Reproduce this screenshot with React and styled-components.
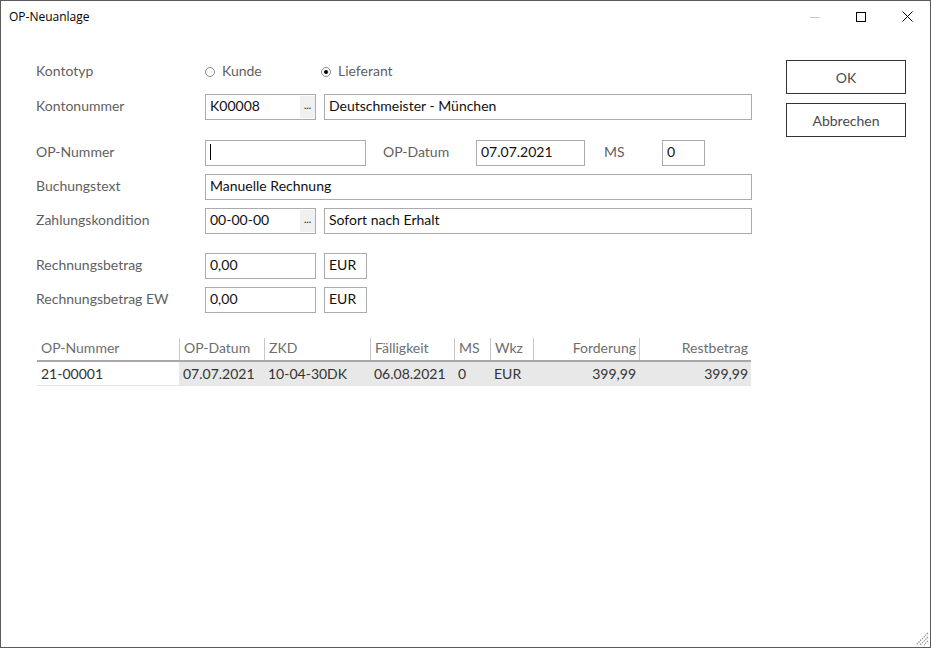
import React from "react";
import styled, { createGlobalStyle } from "styled-components";

const Global = createGlobalStyle`
  html, body { margin: 0; padding: 0; background: #fff; }
  body { font-family: "Source Sans Pro", Lato, "Noto Sans", sans-serif; }
  * { box-sizing: border-box; }
`;

const Window = styled.div`
  width: 931px;
  height: 648px;
  border: 1px solid #5b5b5b;
  background: #fff;
  position: relative;
  display: flex;
  flex-direction: column;
  overflow: hidden;
`;

const TitleBar = styled.div`
  height: 31px;
  display: flex;
  align-items: center;
  padding-left: 8px;
  font-family: "Segoe UI", "Open Sans", "Liberation Sans", sans-serif;
  font-size: 12px;
  color: #000;
`;

const Title = styled.div`
  flex: 1;
`;

const WinButton = styled.div`
  width: 46px;
  height: 31px;
  display: flex;
  align-items: center;
  justify-content: center;
`;

const Body = styled.div`
  flex: 1;
  display: flex;
  padding: 29px 0 0 35px;
`;

const FormCol = styled.div`
  width: 716px;
  display: flex;
  flex-direction: column;
`;

const Row = styled.div`
  display: flex;
  align-items: center;
  height: ${(p) => p.$h || 26}px;
  margin-top: ${(p) => p.$mt || 0}px;
`;

const Label = styled.div`
  width: ${(p) => p.$w || 169}px;
  padding-left: ${(p) => p.$pl || 0}px;
  flex-shrink: 0;
  font-size: 14px;
  color: #5f5f5f;
  margin-top: -3px;
`;

const Input = styled.div`
  position: relative;
  width: ${(p) => (p.$w ? p.$w + "px" : "auto")};
  flex: ${(p) => (p.$w ? "none" : 1)};
  height: 26px;
  border: 1px solid #ababab;
  background: #fff;
  font-size: 14px;
  color: #111;
  padding: 0 4px;
  line-height: 22px;
  margin-right: ${(p) => p.$mr || 0}px;
  white-space: nowrap;
`;

const Dots = styled.div`
  position: absolute;
  right: 0;
  top: 1px;
  width: 15px;
  height: 22px;
  background: #f0f0f0;
  font-size: 10px;
  line-height: 18px;
  text-align: center;
  color: #333;
  font-weight: bold;
`;

const Caret = styled.span`
  display: inline-block;
  width: 1px;
  height: 16px;
  background: #000;
  vertical-align: middle;
  margin-top: -3px;
`;

const RadioItem = styled.div`
  display: flex;
  align-items: center;
  font-size: 14px;
  color: #5f5f5f;
  width: ${(p) => p.$w}px;
  margin-top: -3px;
`;

const RadioDot = styled.span`
  width: 10px;
  height: 10px;
  border-radius: 50%;
  border: 1px solid #8a8a8a;
  margin-right: 7px;
  margin-top: 2px;
  display: flex;
  align-items: center;
  justify-content: center;
  &::after {
    content: "";
    width: 4px;
    height: 4px;
    border-radius: 50%;
    background: ${(p) => (p.$on ? "#000" : "transparent")};
  }
`;

const Table = styled.div`
  margin-top: 23px;
  width: 714px;
  margin-left: 1px;
`;

const TRow = styled.div`
  display: grid;
  grid-template-columns: 142px 85px 106px 84px 36px 43px 106px 112px;
  height: ${(p) => p.$h}px;
  border-bottom: ${(p) => (p.$header ? "2px solid #a8a8a8" : "1px solid #e6e6e6")};
`;

const Cell = styled.div`
  font-size: 14px;
  color: ${(p) => (p.$header ? "#6e6e6e" : "#333")};
  background: ${(p) => (p.$shade ? "#e8e8e8" : "transparent")};
  border-left: ${(p) => (p.$sep ? "1px solid #c8c8c8" : "none")};
  padding: ${(p) => (p.$right ? "0 3px 0 0" : "0 0 0 4px")};
  text-align: ${(p) => (p.$right ? "right" : "left")};
  display: flex;
  align-items: ${(p) => (p.$header ? "flex-start" : "center")};
  justify-content: ${(p) => (p.$right ? "flex-end" : "flex-start")};
  white-space: nowrap;
  margin-top: ${(p) => (p.$header ? "2px" : "0")};
  height: ${(p) => (p.$header ? "22px" : "100%")};
  line-height: 20px;
`;

const ButtonCol = styled.div`
  margin-left: 34px;
  margin-top: -1px;
  display: flex;
  flex-direction: column;
  gap: 9px;
`;

const Button = styled.div`
  width: 120px;
  height: 34px;
  border: 1px solid #333;
  display: flex;
  align-items: center;
  justify-content: center;
  font-size: 14px;
  color: #4a4a4a;
`;

const Grip = styled.svg`
  position: absolute;
  right: 1px;
  bottom: 1px;
`;

const columns = [
  { h: "OP-Nummer", v: "21-00001" },
  { h: "OP-Datum", v: "07.07.2021" },
  { h: "ZKD", v: "10-04-30DK" },
  { h: "Fälligkeit", v: "06.08.2021" },
  { h: "MS", v: "0" },
  { h: "Wkz", v: "EUR" },
  { h: "Forderung", v: "399,99", right: true },
  { h: "Restbetrag", v: "399,99", right: true },
];

export default function App() {
  return (
    <>
      <Global />
      <Window>
        <TitleBar>
          <Title>OP-Neuanlage</Title>
          <WinButton>
            <svg width="10" height="10" viewBox="0 0 10 10">
              <line x1="0" y1="5.5" x2="10" y2="5.5" stroke="#c8c8c8" strokeWidth="1" />
            </svg>
          </WinButton>
          <WinButton>
            <svg width="10" height="10" viewBox="0 0 10 10">
              <rect x="0.5" y="0.5" width="9" height="9" fill="none" stroke="#000" strokeWidth="1" />
            </svg>
          </WinButton>
          <WinButton>
            <svg width="11" height="11" viewBox="0 0 11 11">
              <path d="M0.5 0.5 L10.5 10.5 M10.5 0.5 L0.5 10.5" stroke="#000" strokeWidth="1" />
            </svg>
          </WinButton>
        </TitleBar>
        <Body>
          <FormCol>
            <Row $h={22}>
              <Label>Kontotyp</Label>
              <RadioItem $w={116}>
                <RadioDot />
                Kunde
              </RadioItem>
              <RadioItem $w={120}>
                <RadioDot $on />
                Lieferant
              </RadioItem>
            </Row>
            <Row $mt={11}>
              <Label>Kontonummer</Label>
              <Input $w={111} $mr={8}>
                K00008
                <Dots>...</Dots>
              </Input>
              <Input>Deutschmeister - München</Input>
            </Row>
            <Row $mt={20}>
              <Label>OP-Nummer</Label>
              <Input $w={161}>
                <Caret />
              </Input>
              <Label $w={110} $pl={17}>OP-Datum</Label>
              <Input $w={109}>07.07.2021</Input>
              <Label $w={77} $pl={19}>MS</Label>
              <Input $w={43}>0</Input>
            </Row>
            <Row $mt={8}>
              <Label>Buchungstext</Label>
              <Input>Manuelle Rechnung</Input>
            </Row>
            <Row $mt={8}>
              <Label>Zahlungskondition</Label>
              <Input $w={111} $mr={8}>
                00-00-00
                <Dots>...</Dots>
              </Input>
              <Input>Sofort nach Erhalt</Input>
            </Row>
            <Row $mt={19}>
              <Label>Rechnungsbetrag</Label>
              <Input $w={111} $mr={8}>0,00</Input>
              <Input $w={43}>EUR</Input>
            </Row>
            <Row $mt={8}>
              <Label>Rechnungsbetrag EW</Label>
              <Input $w={111} $mr={8}>0,00</Input>
              <Input $w={43}>EUR</Input>
            </Row>
            <Table>
              <TRow $h={26} $header>
                {columns.map((c, i) => (
                  <Cell key={c.h} $header $sep={i > 0} $right={c.right}>
                    {c.h}
                  </Cell>
                ))}
              </TRow>
              <TRow $h={24}>
                {columns.map((c, i) => (
                  <Cell key={c.h} $shade={i > 0} $right={c.right}>
                    {c.v}
                  </Cell>
                ))}
              </TRow>
            </Table>
          </FormCol>
          <ButtonCol>
            <Button>OK</Button>
            <Button>Abbrechen</Button>
          </ButtonCol>
        </Body>
        <Grip width="14" height="14" viewBox="0 0 14 14">
          <path
            d="M13 1 L1 13 M13 5 L5 13 M13 9 L9 13"
            stroke="#8c8c8c"
            strokeWidth="1.2"
            strokeDasharray="1.4 1"
          />
        </Grip>
      </Window>
    </>
  );
}
